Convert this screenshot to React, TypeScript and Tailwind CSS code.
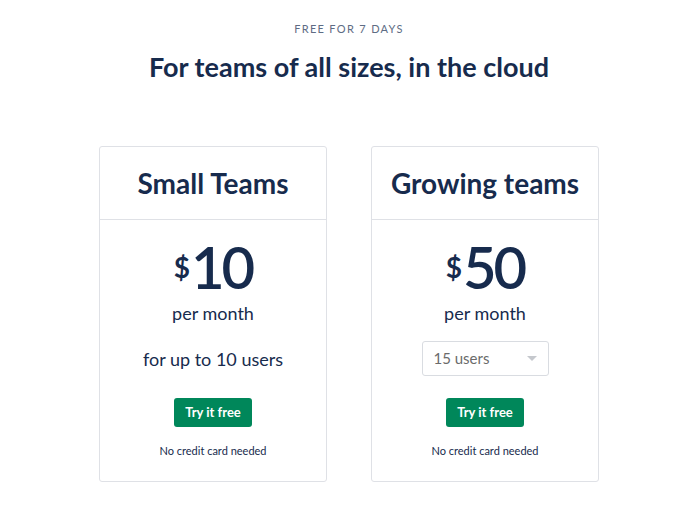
export default function App() {
  return (
    <div className="min-h-screen bg-white font-['Lato',sans-serif] text-[#172b4d] pt-[22px]">
      {/* heading */}
      <div className="text-center">
        <p className="text-[11px] tracking-[0.12em] text-[#5e6c84] leading-[14px]">FREE FOR 7 DAYS</p>
        <h1 className="mt-[15px] text-[27px] font-bold leading-[32px]">For teams of all sizes, in the cloud</h1>
      </div>

      {/* plans */}
      <div className="mt-[63px] flex justify-center gap-[44px]">
        <PlanCard title="Small Teams" price="10">
          <p className="text-[18px] leading-[24px]">for up to 10 users</p>
        </PlanCard>
        <PlanCard title="Growing teams" price="50">
          <div className="flex h-[35px] w-[127px] items-center justify-between rounded-[3px] border border-[#d9dce1] px-[11px]">
            <span className="text-[15px] text-[#6b6b6b]">15 users</span>
            <span className="h-0 w-0 border-x-[5px] border-t-[5px] border-x-transparent border-t-[#c5c8cd]" />
          </div>
        </PlanCard>
      </div>
    </div>
  );
}

function PlanCard({ title, price, children }: { title: string; price: string; children: React.ReactNode }) {
  return (
    <div className="w-[228px] h-[336px] rounded-[3px] border border-[#dfe1e6] text-center">
      <div className="h-[73px] flex items-center justify-center border-b border-[#dfe1e6]">
        <h2 className="text-[28px] font-bold">{title}</h2>
      </div>
      <div className="mt-[18px] flex h-[58px] items-start justify-center">
        <span className="mt-[14px] mr-[1px] text-[28px] font-bold leading-[30px]">$</span>
        <span className="text-[58px] font-semibold leading-[58px] tracking-[-0.05em]">{price}</span>
      </div>
      <p className="mt-[5px] text-[18px] leading-[24px]">per month</p>
      <div className="mt-[16px] flex h-[35px] items-center justify-center">{children}</div>
      <button className="mt-[22px] h-[29px] w-[78px] rounded-[3px] bg-[#00875a] text-[13px] font-bold text-white">
        Try it free
      </button>
      <p className="mt-[16px] text-[11px] leading-[16px] text-[#172b4d]">No credit card needed</p>
    </div>
  );
}
